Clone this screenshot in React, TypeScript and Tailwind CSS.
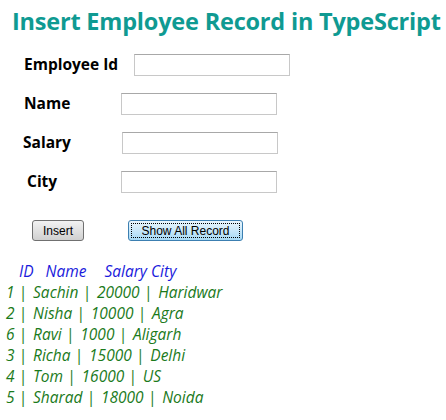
export default function App() {
  const rows = [
    ["1", "Sachin", "20000", "Haridwar"],
    ["2", "Nisha", "10000", "Agra"],
    ["6", "Ravi", "1000", "Aligarh"],
    ["3", "Richa", "15000", "Delhi"],
    ["4", "Tom", "16000", "US"],
    ["5", "Sharad", "18000", "Noida"],
  ];
  const input = "h-[22px] w-[156px] border border-[#c8c8c8] border-t-[#a8a8a8] bg-white";
  const pipe = "ml-[4px] mr-[6px]";
  return (
    <div className="w-[446px] h-[420px] bg-white font-['Open_Sans',sans-serif] text-black">
      <h1 className="pl-[12px] pt-[6px] text-[23.5px] leading-[30px] font-bold text-[#0f9a92] tracking-[-0.2px] whitespace-nowrap">
        Insert Employee Record in TypeScript
      </h1>
      <div className="mt-[18px] flex items-center h-[22px]">
        <span className="ml-[24px] w-[110px] text-[15.5px] font-bold">Employee Id</span>
        <div className={input}></div>
      </div>
      <div className="mt-[17px] flex items-center h-[22px]">
        <span className="ml-[24px] w-[97px] text-[15.5px] font-bold">Name</span>
        <div className={input}></div>
      </div>
      <div className="mt-[17px] flex items-center h-[22px]">
        <span className="ml-[23px] w-[99px] text-[15.5px] font-bold">Salary</span>
        <div className={input}></div>
      </div>
      <div className="mt-[17px] flex items-center h-[22px]">
        <span className="ml-[27px] w-[94px] text-[15.5px] font-bold">City</span>
        <div className={input}></div>
      </div>
      <div className="mt-[27px] flex items-center h-[21px] font-['Liberation_Sans',sans-serif] text-[12px]">
        <button className="ml-[32px] w-[52px] h-[21px] rounded-[3px] border border-[#707070] bg-gradient-to-b from-[#f2f2f2] to-[#d0d0d0]">
          Insert
        </button>
        <button className="ml-[44px] w-[115px] h-[21px] rounded-[3px] border border-[#3c7fb1] bg-gradient-to-b from-[#eaf6fd] to-[#a7d9f5] p-[2px]">
          <span className="block h-full leading-[15px] border border-dotted border-black">Show All Record</span>
        </button>
      </div>
      <div className="mt-[20px] italic text-[15.5px] leading-[21px]">
        <div className="pl-[19px] text-[#1a1adc] whitespace-pre">
          ID<span className="ml-[12px]">Name</span><span className="ml-[18px]">Salary</span> City
        </div>
        {rows.map((r, i) => (
          <div key={i} className="pl-[6px] text-[#1b7a1b] whitespace-pre">
            {r[0]}<span className={pipe}>|</span>{r[1]}<span className={pipe}>|</span>{r[2]}<span className={pipe}>|</span>{r[3]}
          </div>
        ))}
      </div>
    </div>
  );
}
